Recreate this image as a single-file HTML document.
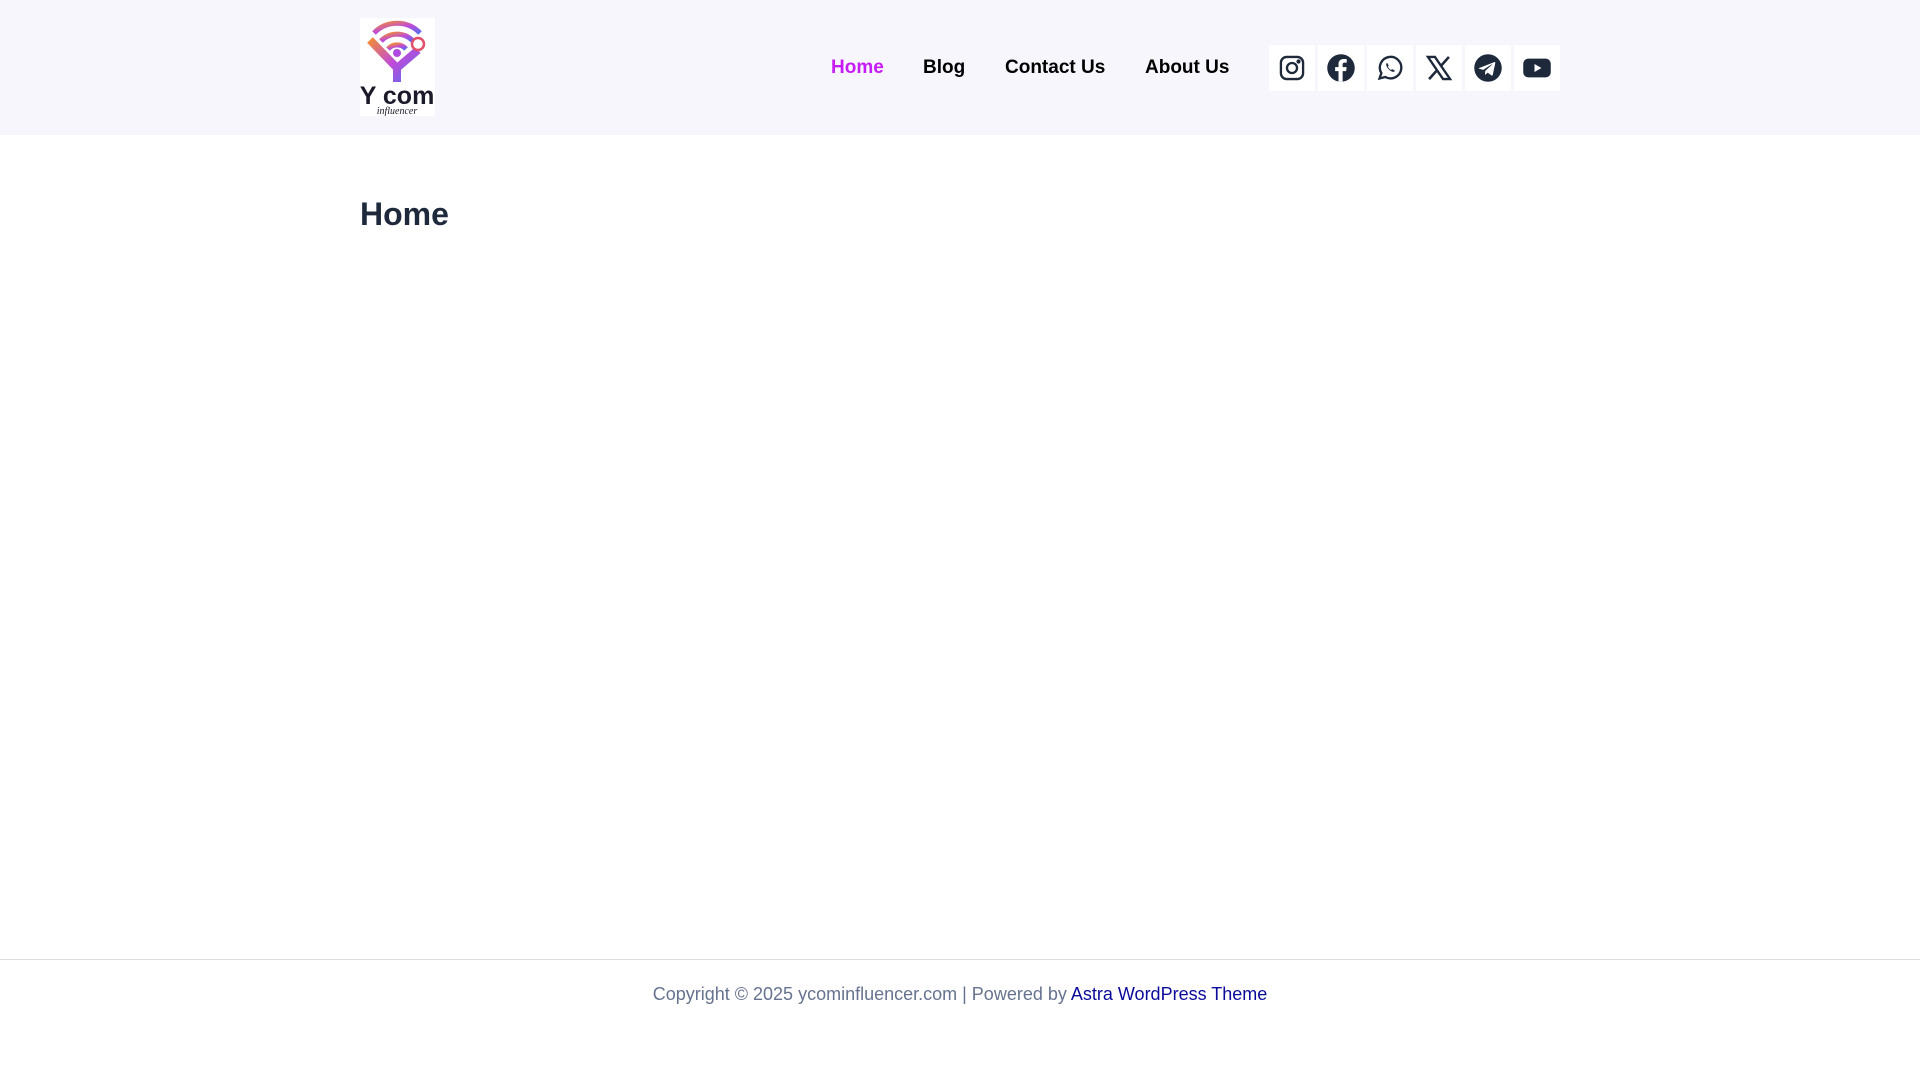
<!DOCTYPE html>
<html><head><meta charset="utf-8"><style>
body{margin:0;width:1920px;height:1080px;background:#fff;font-family:"Liberation Sans",sans-serif;position:relative;overflow:hidden}
.hdr{position:absolute;left:0;top:0;width:1920px;height:135px;background:#f8f6fd}
.nav a{position:absolute;top:56px;font-size:19px;font-weight:bold;color:#000;text-decoration:none;line-height:24px}
.ic{position:absolute;top:45px;width:46px;height:46px;background:#fff;display:flex;align-items:center;justify-content:center}
h1{position:absolute;left:360px;top:194px;margin:0;font-size:32px;line-height:40px;color:#1e293b}
.ft{position:absolute;left:0;top:959px;width:1920px;border-top:1px solid #dcdcdc}
.ftxt{position:absolute;left:0;width:1920px;top:982px;text-align:center;font-size:18px;color:#66728f;line-height:24px}
.ftxt span{color:#0a0a9b}
</style></head><body>
<div class="hdr"></div>
<svg style="position:absolute;left:360px;top:18px" width="75" height="98" viewBox="0 0 75 98">
<defs><linearGradient id="g" x1="0" y1="0" x2="1" y2="1"><stop offset="0" stop-color="#f08a3c"/><stop offset=".5" stop-color="#c04ad8"/><stop offset="1" stop-color="#5a6cf0"/></linearGradient></defs>
<rect width="75" height="98" fill="#fff"/>
<path d="M14 15 A32 32 0 0 1 60 15" stroke="url(#g)" stroke-width="5" fill="none"/>
<path d="M21 23 A22 22 0 0 1 53 23" stroke="url(#g)" stroke-width="5" fill="none"/>
<path d="M28 31 A12 12 0 0 1 46 31" stroke="url(#g)" stroke-width="5" fill="none"/>
<circle cx="37" cy="35" r="4" fill="#b04ae0"/>
<path d="M10 22 L37 50 L37 64 M37 50 L58 32" stroke="url(#g)" stroke-width="8" fill="none"/>
<circle cx="58" cy="26" r="6" fill="#fff" stroke="#e0506a" stroke-width="2.5"/>
<text x="37" y="86" text-anchor="middle" font-family="Liberation Sans" font-weight="bold" font-size="25" fill="#1a1a2a">Y com</text>
<text x="37" y="96" text-anchor="middle" font-family="Liberation Serif" font-style="italic" font-size="10" fill="#1a1a2a">influencer</text>
</svg>
<div class="nav">
<a style="left:831px;color:#c61cf5">Home</a>
<a style="left:923px">Blog</a>
<a style="left:1005px">Contact Us</a>
<a style="left:1145px">About Us</a>
</div>
<div class="ic" style="left:1269px"><svg width="28" height="28" viewBox="0 0 24 24" fill="none" stroke="#1e293b" stroke-width="2"><rect x="2.5" y="2.5" width="19" height="19" rx="5"/><circle cx="12" cy="12" r="4.3"/><circle cx="17.6" cy="6.4" r="0.8" fill="#1e293b"/></svg></div>
<div class="ic" style="left:1318px"><svg width="30" height="30" viewBox="0 0 24 24"><circle cx="12" cy="12" r="11" fill="#1e293b"/><path d="M13.3 23V14.5h2.8l.4-3.2h-3.2V9.3c0-.9.3-1.6 1.6-1.6h1.7V4.9c-.3 0-1.3-.1-2.5-.1-2.5 0-4.1 1.5-4.1 4.2v2.3H7.3v3.2H10V23z" fill="#fff"/></svg></div>
<div class="ic" style="left:1367px"><svg width="28" height="28" viewBox="0 0 24 24" fill="none" stroke="#1e293b" stroke-width="2"><path d="M3 21l1.6-4.6A9.2 9.2 0 1 1 8 19.7z"/><path d="M8.8 8.3c.3-.6.9-.7 1.2-.1l.8 1.6c.1.4-.3.8-.6 1.1.5 1.2 1.6 2.3 2.8 2.8.3-.3.7-.7 1.1-.6l1.6.8c.6.3.5.9-.1 1.2-2.4 1.3-7.6-3.9-6.8-6.8z" fill="#1e293b" stroke="none"/></svg></div>
<div class="ic" style="left:1416px"><svg width="28" height="28" viewBox="0 0 24 24"><path d="M2.5 2.5h6l13 19h-6z" fill="none" stroke="#1e293b" stroke-width="2"/><path d="M20.5 2.5L13.3 10.6M3.5 21.5l7.2-8" stroke="#1e293b" stroke-width="2.2"/></svg></div>
<div class="ic" style="left:1465px"><svg width="30" height="30" viewBox="0 0 24 24"><circle cx="12" cy="12" r="11" fill="#1e293b"/><path d="M5.5 11.8l11.5-4.5c.5-.2 1 .1.8.9l-2 9.3c-.1.6-.6.7-1.1.4l-3-2.2-1.5 1.4c-.2.2-.3.3-.6.3l.2-3.1 5.6-5.1c.3-.2-.1-.3-.4-.1l-6.9 4.4-3-.9c-.6-.2-.6-.6.1-.8z" fill="#fff"/></svg></div>
<div class="ic" style="left:1514px"><svg width="30" height="30" viewBox="0 0 24 24"><rect x="1" y="4.5" width="22" height="15" rx="4" fill="#1e293b"/><path d="M10 8.8v6.4l5.5-3.2z" fill="#fff"/></svg></div>
<h1>Home</h1>
<div class="ft"></div>
<div class="ftxt">Copyright © 2025 ycominfluencer.com | Powered by <span>Astra WordPress Theme</span></div>
</body></html>
